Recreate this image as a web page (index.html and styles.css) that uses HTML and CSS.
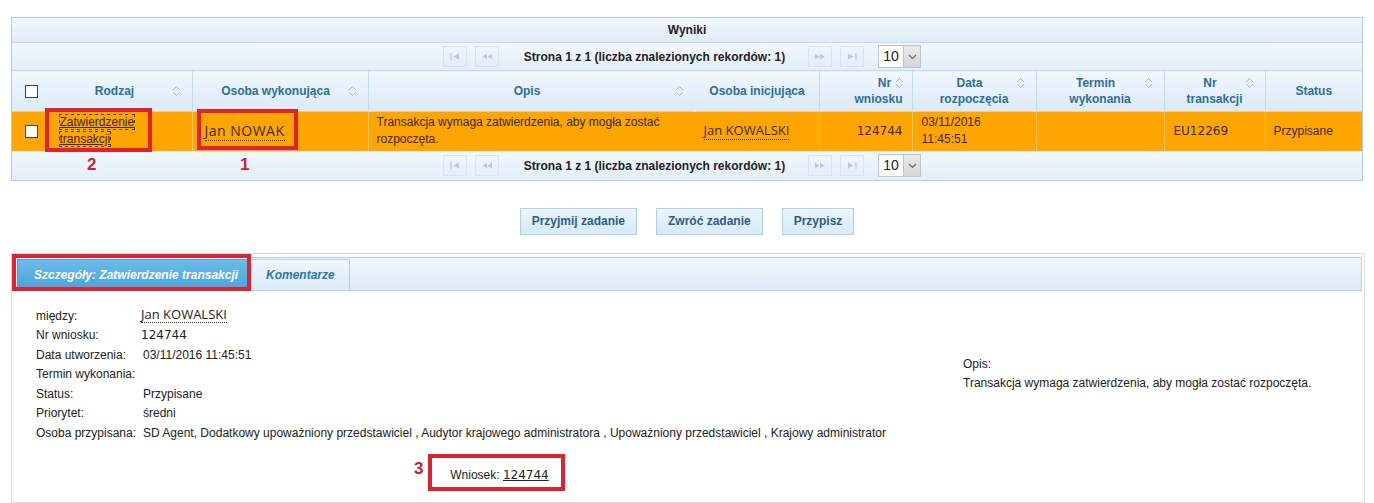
FILE: index.html
```html
<!doctype html>
<html lang="pl">
<head>
  <meta charset="UTF-8" />
  <meta name="viewport" content="width=device-width, initial-scale=1.0" />
  <title>Wyniki - zadania</title>
  <link rel="stylesheet" href="styles.css">
</head>
<body>
  <main class="page">
    <section class="results">
      <div class="results-title">Wyniki</div>

      <div class="paginator">
        <span class="pg-btn"><svg width="10" height="7" viewBox="0 0 10 7"><path d="M1 0v7" stroke="#b9c9d6" stroke-width="1.2"/><path d="M9 0.5L3.5 3.5L9 6.5z" fill="#b9c9d6"/></svg></span>
        <span class="pg-btn"><svg width="10" height="7" viewBox="0 0 10 7"><path d="M5 0.5L0.5 3.5L5 6.5zM10 0.5L5.5 3.5L10 6.5z" fill="#b9c9d6"/></svg></span>
        <span class="pg-text">Strona 1 z 1 (liczba znalezionych rekordów: 1)</span>
        <span class="pg-btn"><svg width="10" height="7" viewBox="0 0 10 7"><path d="M0 0.5L4.5 3.5L0 6.5zM5 0.5L9.5 3.5L5 6.5z" fill="#b9c9d6"/></svg></span>
        <span class="pg-btn"><svg width="10" height="7" viewBox="0 0 10 7"><path d="M1 0.5L6.5 3.5L1 6.5z" fill="#b9c9d6"/><path d="M9 0v7" stroke="#b9c9d6" stroke-width="1.2"/></svg></span>
        <span class="pg-select"><span class="pg-value">10</span><span class="pg-arrow"><svg width="9" height="6" viewBox="0 0 9 6"><path d="M1 1l3.5 3.5L8 1" fill="none" stroke="#666" stroke-width="1.1"/></svg></span></span>
      </div>

      <table class="grid">
        <colgroup>
          <col style="width:34px"><col style="width:146px"><col style="width:176px"><col style="width:327px"><col style="width:124px">
          <col style="width:93px"><col style="width:124px"><col style="width:128px"><col style="width:101px"><col style="width:97px">
        </colgroup>
        <thead>
          <tr>
            <th class="c-check nb"><span class="chk"></span></th>
            <th><span class="sort"></span>Rodzaj</th>
            <th><span class="sort"></span>Osoba wykonująca</th>
            <th class="nb"><span class="sort"></span>Opis</th>
            <th>Osoba inicjująca</th>
            <th class="right">Nr <span class="sort inline"></span><br>wniosku</th>
            <th><span class="sort"></span>Data<br>rozpoczęcia</th>
            <th><span class="sort"></span>Termin<br>wykonania</th>
            <th><span class="sort"></span>Nr<br>transakcji</th>
            <th class="last">Status</th>
          </tr>
        </thead>
        <tbody>
          <tr class="hl">
            <td class="c-check nb"><span class="chk"></span></td>
            <td class="c-type"><a class="link focus" href="#">Zatwierdzenie<br>transakcji</a></td>
            <td class="c-person"><span class="person big">Jan NOWAK</span></td>
            <td class="nb">Transakcja wymaga zatwierdzenia, aby mogła zostać rozpoczęta.</td>
            <td><span class="person">Jan KOWALSKI</span></td>
            <td class="right"><span class="num">124744</span></td>
            <td class="c-date">03/11/2016<br>11:45:51</td>
            <td></td>
            <td class="c-date"><span class="num">EU12269</span></td>
            <td class="last">Przypisane</td>
          </tr>
        </tbody>
      </table>

      <div class="paginator bottom">
        <span class="pg-btn"><svg width="10" height="7" viewBox="0 0 10 7"><path d="M1 0v7" stroke="#b9c9d6" stroke-width="1.2"/><path d="M9 0.5L3.5 3.5L9 6.5z" fill="#b9c9d6"/></svg></span>
        <span class="pg-btn"><svg width="10" height="7" viewBox="0 0 10 7"><path d="M5 0.5L0.5 3.5L5 6.5zM10 0.5L5.5 3.5L10 6.5z" fill="#b9c9d6"/></svg></span>
        <span class="pg-text">Strona 1 z 1 (liczba znalezionych rekordów: 1)</span>
        <span class="pg-btn"><svg width="10" height="7" viewBox="0 0 10 7"><path d="M0 0.5L4.5 3.5L0 6.5zM5 0.5L9.5 3.5L5 6.5z" fill="#b9c9d6"/></svg></span>
        <span class="pg-btn"><svg width="10" height="7" viewBox="0 0 10 7"><path d="M1 0.5L6.5 3.5L1 6.5z" fill="#b9c9d6"/><path d="M9 0v7" stroke="#b9c9d6" stroke-width="1.2"/></svg></span>
        <span class="pg-select"><span class="pg-value">10</span><span class="pg-arrow"><svg width="9" height="6" viewBox="0 0 9 6"><path d="M1 1l3.5 3.5L8 1" fill="none" stroke="#666" stroke-width="1.1"/></svg></span></span>
      </div>
    </section>

    <div class="actions">
      <button>Przyjmij zadanie</button>
      <button>Zwróć zadanie</button>
      <button>Przypisz</button>
    </div>

    <section class="details">
      <nav class="tabs">
        <a class="tab active" href="#">Szczegóły: Zatwierdzenie transakcji</a>
        <a class="tab" href="#">Komentarze</a>
      </nav>
      <div class="tab-body">
        <div class="detail-grid">
          <table class="info">
            <tr><td class="lbl">między:</td><td><span class="person under">Jan KOWALSKI</span></td></tr>
            <tr><td class="lbl">Nr wniosku:</td><td><span class="num">124744</span></td></tr>
            <tr><td class="lbl">Data utworzenia:</td><td class="val">03/11/2016 11:45:51</td></tr>
            <tr><td class="lbl">Termin wykonania:</td><td></td></tr>
            <tr><td class="lbl">Status:</td><td class="val">Przypisane</td></tr>
            <tr><td class="lbl">Priorytet:</td><td class="val">średni</td></tr>
            <tr><td class="lbl">Osoba przypisana:</td><td class="val">SD Agent, Dodatkowy upoważniony przedstawiciel , Audytor krajowego administratora , Upoważniony przedstawiciel , Krajowy administrator</td></tr>
          </table>
          <div class="opis">
            <div>Opis:</div>
            <div>Transakcja wymaga zatwierdzenia, aby mogła zostać rozpoczęta.</div>
          </div>
        </div>
        <div class="req-row">Wniosek: <a class="num req" href="#">124744</a></div>
      </div>
    </section>

    <!-- annotation marks drawn over the screenshot -->
    <span class="mark" style="left:45px;top:108px;width:107px;height:44px"></span>
    <span class="mark" style="left:197px;top:109px;width:101px;height:41px"></span>
    <span class="mark" style="left:12px;top:254px;width:239px;height:37px"></span>
    <span class="mark" style="left:428px;top:454px;width:137px;height:37px"></span>
    <span class="mark-num" style="left:87px;top:155px">2</span>
    <span class="mark-num" style="left:240px;top:155px">1</span>
    <span class="mark-num" style="left:414px;top:459px">3</span>
  </main>
</body>
</html>
```

FILE: styles.css
```css
:root {
  --border: #aed0ea;
  --line: #c5dbec;
  --head-ink: #2b6f9f;
  --ink: #222;
  --row: #ffa500;
  --row-ink: #3b2a0c;
  --mark: #e0222c;
}

* { box-sizing: border-box; }

body {
  margin: 0;
  background: #fff;
  font-family: "Liberation Sans", Arial, sans-serif;
  font-size: 12px;
  color: var(--ink);
}

.page {
  position: relative;
  width: 1374px;
  height: 503px;
  padding: 17px 0 0 11px;
  overflow: hidden;
}

/* results table */
.results {
  width: 1352px;
  border: 1px solid var(--border);
}

.results-title {
  height: 25px;
  line-height: 25px;
  text-align: center;
  font-weight: bold;
  background: linear-gradient(#f3f8fc, #deecf7);
  border-bottom: 1px solid var(--line);
}

.paginator {
  height: 27px;
  display: flex;
  align-items: center;
  justify-content: center;
  gap: 8px;
  padding-right: 10px;
  background: linear-gradient(#f1f7fc, #e3eef8);
}

.paginator.bottom {
  height: 29px;
  border-top: 1px solid #d9e7f2;
}

.pg-btn {
  width: 24px;
  height: 21px;
  display: flex;
  align-items: center;
  justify-content: center;
  border: 1px solid #d5e4f0;
  background: linear-gradient(#eef5fb, #e3eef8);
}

.pg-text {
  font-weight: bold;
  margin: 0 15px 0 17px;
}

.pg-select {
  display: flex;
  margin-left: 6px;
  height: 23px;
  width: 43px;
  border: 1px solid #b5c7d6;
  background: #fff;
}

.pg-value {
  flex: 1;
  font-size: 14px;
  line-height: 21px;
  padding-left: 4px;
}

.pg-arrow {
  width: 17px;
  display: flex;
  align-items: center;
  justify-content: center;
  background: linear-gradient(#e9e9e9, #d6d6d6);
  border-left: 1px solid #c3c3c3;
}

.grid {
  width: 1350px;
  table-layout: fixed;
  border-collapse: collapse;
}

.grid th {
  height: 41px;
  padding: 0 6px;
  font-weight: bold;
  line-height: 16px;
  color: var(--head-ink);
  text-align: center;
  background: linear-gradient(#f1f7fc, #dbeaf6);
  border-top: 1px solid var(--line);
  border-right: 1px solid var(--line);
}

.grid td {
  height: 39px;
  padding: 0 7px 0 8px;
  line-height: 17px;
  color: var(--row-ink);
  background: var(--row);
  border-top: 1px solid #f5cf8a;
  border-right: 1px solid #fcc463;
}

.grid .nb { border-right-color: transparent; }
.grid .last { border-right: 0; }
.grid .right { text-align: right; padding-right: 9px; }
.grid .c-check { padding: 0 0 0 13px; text-align: left; }
.grid .c-type { padding-left: 13px; }
.grid .c-person { padding-left: 12px; }
.grid .c-date { padding-left: 9px; }

.sort {
  float: right;
  width: 7px;
  height: 10px;
  margin: 3px 6px 0 -4px;
  background:
    linear-gradient(135deg, transparent 45%, #a9bccb 45%, #a9bccb 60%, transparent 60%) 0 0 / 4px 4px no-repeat,
    linear-gradient(225deg, transparent 45%, #a9bccb 45%, #a9bccb 60%, transparent 60%) 3px 0 / 4px 4px no-repeat,
    linear-gradient(45deg, transparent 45%, #a9bccb 45%, #a9bccb 60%, transparent 60%) 0 6px / 4px 4px no-repeat,
    linear-gradient(315deg, transparent 45%, #a9bccb 45%, #a9bccb 60%, transparent 60%) 3px 6px / 4px 4px no-repeat;
}

.sort.inline {
  float: none;
  display: inline-block;
  margin: 0 0 0 1px;
  vertical-align: -1px;
}

.chk {
  display: inline-block;
  width: 13px;
  height: 13px;
  border: 1px solid #444;
  background: #fff;
  vertical-align: middle;
}

.link {
  color: var(--row-ink);
  text-decoration: underline;
}

.link.focus { outline: 1px dotted #5a3d00; }

.person {
  font-family: "Open Sans", "DejaVu Sans", sans-serif;
  font-size: 13px;
  border-bottom: 1px dotted #5a3d00;
}

.person.big {
  font-size: 14px;
  letter-spacing: 0.5px;
}

.num {
  font-family: "DejaVu Sans", Verdana, sans-serif;
  font-size: 12px;
}

/* action buttons */
.actions {
  display: flex;
  justify-content: center;
  gap: 19px;
  width: 1352px;
  margin: 27px 0 18px;
}

button {
  height: 27px;
  padding: 0 11px;
  font: bold 12px "Liberation Sans", Arial, sans-serif;
  color: #2a5f8c;
  border: 1px solid var(--border);
  background: linear-gradient(#eaf4fc, #d7ebf9);
  cursor: pointer;
}

/* details panel */
.details {
  width: 1354px;
  height: 250px;
  padding: 3px 2px;
  border: 1px solid #dcdcdc;
}

.tabs {
  display: flex;
  align-items: flex-end;
  gap: 1px;
  height: 34px;
  padding: 2px 0 0 2px;
  border: 1px solid var(--border);
  background: linear-gradient(#f3f8fc, #dceaf6);
}

.tab {
  height: 31px;
  line-height: 30px;
  padding: 0 14px 0 15px;
  font-weight: bold;
  font-style: italic;
  color: #2779aa;
  text-decoration: none;
  border: 1px solid var(--border);
  border-bottom: 0;
  background: linear-gradient(#eef6fc, #dcebf7);
}

.tab.active {
  width: 232px;
  padding: 0 0 0 16px;
  color: #fff;
  border-color: #4aa3da;
  background: linear-gradient(#6cbbe9, #45a4dd);
}

.tab-body {
  padding: 15px 0 0 22px;
}

.detail-grid {
  display: grid;
  grid-template-columns: 927px 1fr;
  align-items: center;
}

.info {
  border-collapse: collapse;
}

.info td {
  height: 19.5px;
  padding: 0;
  white-space: nowrap;
  vertical-align: middle;
}

.info .lbl { width: 105px; }
.info .val { padding-left: 2px; }

.person.under {
  display: inline-block;
  line-height: 16px;
  margin-bottom: 3px;
  border-bottom-color: #333;
}

.opis div { line-height: 19px; }

.req-row {
  width: 927px;
  margin-top: 22px;
  line-height: 20px;
  text-align: center;
}

.req {
  color: #222;
  text-decoration: underline;
}

/* annotations */
.mark {
  position: absolute;
  border: 4px solid var(--mark);
}

.mark-num {
  position: absolute;
  font: bold 17px "Liberation Sans", Arial, sans-serif;
  color: #c7242c;
}
```
